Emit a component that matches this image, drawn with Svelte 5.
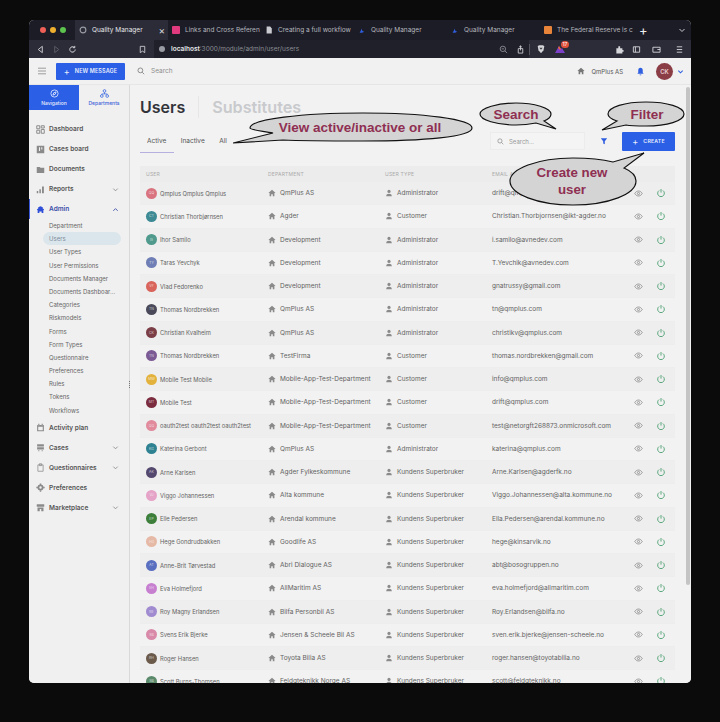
<script>
  const tabs = [
    { title: 'Quality Manager', icon: 'globe', active: true },
    { title: 'Links and Cross Referen', icon: 'pink' },
    { title: 'Creating a full workflow', icon: 'doc' },
    { title: 'Quality Manager', icon: 'q' },
    { title: 'Quality Manager', icon: 'q' },
    { title: 'The Federal Reserve is c', icon: 'orange' }
  ];

  const mainNav = [
    { label: 'Dashboard', icon: 'grid' },
    { label: 'Cases board', icon: 'board' },
    { label: 'Documents', icon: 'folder' },
    { label: 'Reports', icon: 'bars', chevron: 'down' },
    { label: 'Admin', icon: 'admin', chevron: 'up', active: true }
  ];
  const subNav = ['Department', 'Users', 'User Types', 'User Permissions', 'Documents Manager', 'Documents Dashboar...', 'Categories', 'Riskmodels', 'Forms', 'Form Types', 'Questionnaire', 'Preferences', 'Rules', 'Tokens', 'Workflows'];
  const lowerNav = [
    { label: 'Activity plan', icon: 'calendar' },
    { label: 'Cases', icon: 'cases', chevron: 'down' },
    { label: 'Questionnaires', icon: 'clip', chevron: 'down' },
    { label: 'Preferences', icon: 'gear' },
    { label: 'Marketplace', icon: 'store', chevron: 'down' }
  ];

  const users = [
    ['QQ', '#d9737f', 'Qmplus Qmplus Qmplus', 'QmPlus AS', 'Administrator', 'drift@qmplus.com'],
    ['CT', '#3d8a94', 'Christian Thorbjørnsen', 'Agder', 'Customer', 'Christian.Thorbjornsen@ikt-agder.no'],
    ['IS', '#4f9a8c', 'Ihor Samilo', 'Development', 'Administrator', 'i.samilo@avnedev.com'],
    ['TY', '#6f7fb5', 'Taras Yevchyk', 'Development', 'Administrator', 'T.Yevchik@avnedev.com'],
    ['VF', '#d9645c', 'Vlad Fedorenko', 'Development', 'Administrator', 'gnatrussy@gmail.com'],
    ['TN', '#4a4a5a', 'Thomas Nordbrekken', 'QmPlus AS', 'Administrator', 'tn@qmplus.com'],
    ['CK', '#7b3d46', 'Christian Kvalheim', 'QmPlus AS', 'Administrator', 'christikv@qmplus.com'],
    ['TN', '#7c5a94', 'Thomas Nordbrekken', 'TestFirma', 'Customer', 'thomas.nordbrekken@gmail.com'],
    ['MM', '#e3b23c', 'Mobile Test Mobile', 'Mobile-App-Test-Department', 'Customer', 'info@qmplus.com'],
    ['MT', '#7b2d3f', 'Mobile Test', 'Mobile-App-Test-Department', 'Customer', 'drift@qmplus.com'],
    ['OO', '#e08a9c', 'oauth2test oauth2test oauth2test', 'Mobile-App-Test-Department', 'Customer', 'test@netorgft268873.onmicrosoft.com'],
    ['KG', '#2f8291', 'Katerina Gerbont', 'QmPlus AS', 'Administrator', 'katerina@qmplus.com'],
    ['AK', '#54486e', 'Arne Karlsen', 'Agder Fylkeskommune', 'Kundens Superbruker', 'Arne.Karlsen@agderfk.no'],
    ['VJ', '#e5a3c8', 'Viggo Johannessen', 'Alta kommune', 'Kundens Superbruker', 'Viggo.Johannessen@alta.kommune.no'],
    ['EP', '#3d7f3a', 'Elle Pedersen', 'Arendal kommune', 'Kundens Superbruker', 'Ella.Pedersen@arendal.kommune.no'],
    ['HG', '#e5b9a5', 'Hege Gondrudbakken', 'Goodlife AS', 'Kundens Superbruker', 'hege@kinsarvik.no'],
    ['AT', '#5a6fc0', 'Anne-Brit Tørvestad', 'Abri Dialogue AS', 'Kundens Superbruker', 'abt@bosogruppen.no'],
    ['EH', '#c77fd0', 'Eva Holmefjord', 'AllMaritim AS', 'Kundens Superbruker', 'eva.holmefjord@allmaritim.com'],
    ['RE', '#a08bd0', 'Roy Magny Erlandsen', 'Bilfa Personbil AS', 'Kundens Superbruker', 'Roy.Erlandsen@bilfa.no'],
    ['SB', '#d98aa8', 'Svens Erik Bjerke', 'Jensen & Scheele Bil AS', 'Kundens Superbruker', 'sven.erik.bjerke@jensen-scheele.no'],
    ['RH', '#6b5a4a', 'Roger Hansen', 'Toyota Bilia AS', 'Kundens Superbruker', 'roger.hansen@toyotabilia.no'],
    ['SB', '#5a8a6a', 'Scott Burns-Thomsen', 'Feldgteknikk Norge AS', 'Kundens Superbruker', 'scott@feldgteknikk.no']
  ];
</script>

{#snippet navIcon(name)}
  <svg class="nav-icon" viewBox="0 0 12 12" fill="currentColor">
    {#if name === 'grid'}
      <path d="M1 1h4v4H1zM7 1h4v3H7zM7 6h4v5H7zM1 7h4v4H1z" fill="none" stroke="currentColor" stroke-width="1.3" />
    {:else if name === 'board'}
      <path d="M1 1h10v10H1z M4 3v5h1.400V3z M7 3v3h1.400V3z" fill-rule="evenodd" />
    {:else if name === 'folder'}
      <path d="M1 2.500h4l1 1.200h5V10.500H1z" />
    {:else if name === 'bars'}
      <path d="M1 8h2v3H1zM4.500 5.500h2V11h-2zM8 2h2.500v9H8z" />
    {:else if name === 'admin'}
      <path d="M6 1.500 9 3v1.800l1.800 1-1 1.500V10.500H7.500V8.500h-3v2H2.200V7.300l-1-1.500L3 4.800V3z" />
    {:else if name === 'calendar'}
      <path d="M1.500 2.500h9v8.500h-9z M3 5v4.500h6V5z M3 1h1.500v2H3z M7.500 1H9v2H7.500z" fill-rule="evenodd" />
    {:else if name === 'cases'}
      <path d="M1.500 1.500h9v3h-9zM1.500 5.500h9v3h-9zM3 9.500h1.500V11H3zM7.500 9.500H9V11H7.500z" />
    {:else if name === 'clip'}
      <path d="M2.500 2.500h7v8.500h-7z M4.500 1h3v2.500h-3z" fill="none" stroke="currentColor" stroke-width="1" />
    {:else if name === 'gear'}
      <circle cx="6" cy="6" r="2.800" fill="none" stroke="currentColor" stroke-width="2.400" />
      <path d="M5 .5h2v2H5zM5 9.500h2v2H5zM.5 5h2v2h-2zM9.500 5h2v2h-2z" />
    {:else if name === 'store'}
      <path d="M1 1.500h10v3.500H1zM2 6h8v5H7V8H5v3H2z" />
    {/if}
  </svg>
{/snippet}

{#snippet chevron(dir)}
  <svg class="chev" class:up={dir === 'up'} viewBox="0 0 8 8" fill="none" stroke="currentColor" stroke-width="1">
    <path d={dir === 'up' ? 'M1.500 5.500 4 3l2.500 2.500' : 'M1.500 3 4 5.500 6.500 3'} />
  </svg>
{/snippet}

{#snippet navRow(item)}
  <div class="nav-row" class:active={item.active}>
    {@render navIcon(item.icon)}
    <span>{item.label}</span>
    {#if item.chevron}{@render chevron(item.chevron)}{/if}
  </div>
{/snippet}

<div class="window">
  <div class="tabbar">
    <div class="lights"><i class="red"></i><i class="yellow"></i><i class="green"></i></div>
    {#each tabs as tab}
      <div class="tab" class:active={tab.active}>
        {#if tab.icon === 'globe'}
          <svg class="fav" viewBox="0 0 10 10"><circle cx="5" cy="5" r="3.600" fill="none" stroke="#9a9ca4" stroke-width="1.400" /></svg>
        {:else if tab.icon === 'pink'}
          <span class="fav-box pink"></span>
        {:else if tab.icon === 'doc'}
          <svg class="fav" viewBox="0 0 10 10"><path d="M2 .5h4.500L8.500 3v6.500H2z" fill="#c9cbd0" /></svg>
        {:else if tab.icon === 'q'}
          <svg class="fav" viewBox="0 0 10 10"><path d="M2 8c2 1 4 .5 6-1-2 0-3-1-3.500-4C4 5 3 7 2 8z" fill="#2f5fe0" /></svg>
        {:else}
          <span class="fav-box orange"></span>
        {/if}
        <span class="tab-title">{tab.title}</span>
        {#if tab.active}<span class="close">×</span>{/if}
      </div>
    {/each}
    <span class="plus">+</span>
    <svg class="tabs-menu" viewBox="0 0 8 8" fill="none" stroke="#c9cbd0" stroke-width="1"><path d="M1.500 3 4 5.500 6.500 3" /></svg>
  </div>

  <div class="toolbar">
    <div class="tool-left">
      <svg viewBox="0 0 10 10" fill="none" stroke="#d5d6da" stroke-width="1"><path d="M7 1.500v7L2.500 5z" /></svg>
      <svg viewBox="0 0 10 10" fill="none" stroke="#5d6069" stroke-width="1"><path d="M3 1.500v7L7.500 5z" /></svg>
      <svg viewBox="0 0 10 10" fill="none" stroke="#d5d6da" stroke-width="1.100"><path d="M8 5a3 3 0 1 1-1-2.300M7.500 1v2h-2" /></svg>
    </div>
    <svg class="bookmark" viewBox="0 0 10 10" fill="none" stroke="#c9cbd0" stroke-width="1"><path d="M2.500 1.500h5v7L5 6.800 2.500 8.500z" /></svg>
    <div class="url">
      <span class="info"></span>
      <span class="host">localhost</span><span class="path">:3000/module/admin/user/users</span>
      <svg class="zoom-out" viewBox="0 0 10 10" fill="none" stroke="#8b8d95" stroke-width="1"><circle cx="4.300" cy="4.300" r="3" /><path d="M6.500 6.500 9 9M3 4.300h2.600" /></svg>
      <svg class="share" viewBox="0 0 10 10" fill="none" stroke="#c9cbd0" stroke-width="1"><path d="M2.500 4h5v5h-5zM5 6V1M3.500 2.300 5 1l1.500 1.300" /></svg>
    </div>
    <span class="sep"></span>
    <svg class="brave" viewBox="0 0 12 12"><path d="M2 2.500 4 1.500h4l2 1-1 5L6 11 3 7.500z" fill="#d5d6da" /><path d="M4 4.500h4L6 7z" fill="#3a3c46" /></svg>
    <div class="rewards">
      <svg viewBox="0 0 12 12"><path d="M1 10 5 3l2 3 1-1 3 5z" fill="#7b3fc8" /><path d="M4 5 5 3l2 3-1 1z" fill="#e8653a" /></svg>
      <span class="count">17</span>
    </div>
    <div class="tool-right">
      <svg viewBox="0 0 10 10"><path d="M1.500 3.500h2.200V1.500h2v2h2.500v2h1.300v2H8.200v2h-6.700z" fill="#d5d6da" /></svg>
      <svg viewBox="0 0 10 10" fill="none" stroke="#d5d6da" stroke-width="1"><path d="M1.500 2h7v6h-7zM3.800 2v6" /></svg>
      <svg viewBox="0 0 10 10" fill="none" stroke="#d5d6da" stroke-width="1"><path d="M1 2.500h8v5.500H1zM6 5h3" /></svg>
      <svg viewBox="0 0 10 10" fill="none" stroke="#d5d6da" stroke-width="1"><path d="M2 2h6M2 5h6M2 8h6" /></svg>
    </div>
  </div>

  <header class="appbar">
    <svg class="burger" viewBox="0 0 12 10" fill="none" stroke="#888" stroke-width="1"><path d="M1 1.500h10M1 5h10M1 8.500h10" /></svg>
    <button class="new-message"><span class="btn-plus">+</span>NEW MESSAGE</button>
    <svg class="top-search" viewBox="0 0 10 10" fill="none" stroke="#777" stroke-width="1"><circle cx="4.200" cy="4.200" r="3" /><path d="M6.500 6.500 9 9" /></svg>
    <span class="top-search-text">Search</span>
    <div class="account">
      <svg class="home" viewBox="0 0 10 10"><path d="M5 1 9.500 5H8v4H6V6.500H4V9H2V5H.5z" fill="#777" /></svg>
      <span class="company">QmPlus AS</span>
      <svg class="bell" viewBox="0 0 10 10"><path d="M5 .8C3.300.8 2.500 2 2.500 3.800V6L1.500 7.500h7L7.500 6V3.800C7.500 2 6.700.8 5 .8zM4 8.200h2a1 1 0 0 1-2 0z" fill="#2f5fe0" /></svg>
      <span class="me">CK</span>
      <svg class="me-chev" viewBox="0 0 8 8" fill="none" stroke="#2f5fe0" stroke-width="1.200"><path d="M1.500 3 4 5.500 6.500 3" /></svg>
    </div>
  </header>

  <div class="body">
    <aside class="sidebar">
      <div class="switch">
        <div class="sw on">
          <svg viewBox="0 0 10 10" fill="none" stroke="#fff" stroke-width=".8"><circle cx="5" cy="5" r="4" /><path d="M6.800 3.200 5.800 5.800 3.200 6.800 4.200 4.200z" /></svg>
          <span>Navigation</span>
        </div>
        <div class="sw">
          <svg viewBox="0 0 10 10" fill="none" stroke="#2f5fe0" stroke-width=".8"><circle cx="5" cy="2.200" r="1.500" /><circle cx="2" cy="7.800" r="1.500" /><circle cx="8" cy="7.800" r="1.500" /><path d="M5 3.700v1.800M2 6.300V5.500h6v.8" /></svg>
          <span>Departments</span>
        </div>
      </div>
      <nav class="nav">
        {#each mainNav as item}
          {@render navRow(item)}
        {/each}
        <div class="sub">
          {#each subNav as label}
            <div class="sub-row" class:current={label === 'Users'}>{label}</div>
          {/each}
        </div>
        {#each lowerNav as item}
          {@render navRow(item)}
        {/each}
      </nav>
      <span class="handle"></span>
    </aside>

    <main class="content">
      <div class="scrollbar"></div>
      <div class="titles">
        <h1>Users</h1>
        <h2>Substitutes</h2>
      </div>
      <div class="filters">
        <div class="tabs">
          <span class="on">Active</span>
          <span>Inactive</span>
          <span>All</span>
        </div>
        <div class="search-box">
          <svg viewBox="0 0 10 10" fill="none" stroke="#888" stroke-width="1"><circle cx="4.200" cy="4.200" r="3" /><path d="M6.500 6.500 9 9" /></svg>
          <span>Search...</span>
        </div>
        <svg class="filter" viewBox="0 0 10 10"><path d="M1 1.500h8L6 5.200V9L4 8V5.200z" fill="#2f5fe0" /></svg>
        <button class="create"><span class="btn-plus">+</span>CREATE</button>
      </div>

      <div class="table">
        <div class="row head">
          <span class="c-user">USER</span>
          <span class="c-dept">DEPARTMENT</span>
          <span class="c-type">USER TYPE</span>
          <span class="c-mail">EMAIL ADDRESS</span>
        </div>
        {#each users as u}
          <div class="row">
            <span class="c-user">
              <span class="avatar" style="background:{u[1]}">{u[0]}</span>
              <span class="name">{u[2]}</span>
            </span>
            <span class="c-dept">
              <svg viewBox="0 0 10 10"><path d="M5 1 9.500 5H8v4H6V6.500H4V9H2V5H.5z" fill="#8a8a8a" /></svg>
              {u[3]}
            </span>
            <span class="c-type">
              <svg viewBox="0 0 10 10"><circle cx="5" cy="3" r="2" fill="#8a8a8a" /><path d="M1.500 9c0-2 1.500-3 3.500-3s3.500 1 3.500 3z" fill="#8a8a8a" /></svg>
              {u[4]}
            </span>
            <span class="c-mail">{u[5]}</span>
            <svg class="eye" viewBox="0 0 12 12" fill="none" stroke="#777" stroke-width=".9"><path d="M1 6c1.300-2.200 3-3.300 5-3.300S9.700 3.800 11 6c-1.300 2.200-3 3.300-5 3.300S2.300 8.200 1 6z" /><circle cx="6" cy="6" r="1.500" /></svg>
            <svg class="power" viewBox="0 0 12 12" fill="none" stroke="#3f9a68" stroke-width="1"><path d="M3.800 3a4 4 0 1 0 4.400 0M6 1.200v4.300" /></svg>
          </div>
        {/each}
      </div>

      <div class="callout view">
        <svg viewBox="0 0 242 32"><path d="M0 31 40 21C30 19 17 18 17 16 17 7 70 1 130 1S239 7 239 16 190 29 130 29C100 29 70 29 50 28z" /></svg>
        <span>View active/inactive or all</span>
      </div>
      <div class="callout search">
        <svg viewBox="0 0 78 28"><path d="M77 27 65 19C70 17 72 14 72 12 72 6 55 1 37 1S1 6 1 12 18 23 37 23C44 23 52 22 57 21z" /></svg>
        <span>Search</span>
      </div>
      <div class="callout filter-note">
        <svg viewBox="0 0 84 30"><path d="M1 29 16 20C10 18 7 15 7 13 7 6 24 1 45 1S83 6 83 13 66 25 45 25C37 25 30 25 25 24z" /></svg>
        <span>Filter</span>
      </div>
      <div class="callout create-note">
        <svg viewBox="0 0 136 54"><path d="M135 1 104 10C92 7 80 6 64 6 28 6 1 17 1 29 1 42 28 53 64 53S127 42 127 29C127 24 122 19 115 16z" /></svg>
        <span>Create new<br />user</span>
      </div>
    </main>
  </div>
</div>

<style>
  :global(body) {
    margin: 0;
    background: #0b0b0c;
  }
  .window {
    width: 662px;
    height: 663px;
    margin: 20px 0 0 29px;
    border-radius: 5px;
    overflow: hidden;
    display: flex;
    flex-direction: column;
    font-family: Inter, 'Liberation Sans', sans-serif;
    background: #f1f1f1;
  }
  svg { display: block; flex: none; }

  .tabbar {
    height: 20px;
    background: #1c1c26;
    display: flex;
    align-items: stretch;
    color: #b5b7bd;
    font-size: 6.500px;
    flex: none;
  }
  .lights {
    width: 46px;
    display: flex;
    align-items: center;
    gap: 4px;
    padding-left: 11px;
    box-sizing: border-box;
  }
  .lights i { width: 6px; height: 6px; border-radius: 50%; }
  .red { background: #ed5f57; }
  .yellow { background: #f0b02f; }
  .green { background: #5cc34f; }
  .tab {
    width: 93px;
    display: flex;
    align-items: center;
    gap: 5px;
    padding-left: 4px;
    box-sizing: border-box;
    white-space: nowrap;
  }
  .tab.active {
    background: #2b2c37;
    color: #e6e7ea;
    padding-right: 3px;
  }
  .tab-title { flex: 1; }
  .fav { width: 8px; height: 8px; }
  .fav-box { width: 8px; height: 8px; border-radius: 1px; flex: none; }
  .pink { background: #e03a7e; }
  .orange { background: #e8833a; }
  .close { font-size: 10px; color: #d5d6da; }
  .plus { color: #eee; font-size: 13px; margin: 0 0 0 6px; line-height: 20px; }
  .tabs-menu { width: 8px; height: 8px; margin: 6px 0 0 30px; }

  .toolbar {
    height: 18px;
    background: #2b2c37;
    display: flex;
    align-items: center;
    flex: none;
    color: #c9cbd0;
  }
  .tool-left { display: flex; gap: 7px; padding-left: 7px; width: 98px; box-sizing: border-box; }
  .tool-left svg, .tool-right svg { width: 9px; height: 9px; }
  .bookmark { width: 9px; height: 9px; margin-left: 11px; }
  .url {
    width: 375px;
    height: 18px;
    margin-left: 7px;
    padding-left: 5px;
    box-sizing: border-box;
    background: #1f2029;
    display: flex;
    align-items: center;
    font-size: 6.500px;
  }
  .info { width: 6px; height: 6px; border-radius: 50%; background: #9a9ca4; margin-right: 6px; }
  .host { color: #e6e7ea; font-weight: 600; }
  .path { color: #8b8d95; }
  .zoom-out { width: 9px; height: 9px; margin-left: auto; }
  .share { width: 9px; height: 9px; margin: 0 4px 0 8px; }
  .sep { width: 1px; height: 11px; background: #55565f; }
  .brave { width: 10px; height: 10px; margin-left: 6px; }
  .rewards { position: relative; width: 12px; height: 12px; margin-left: 8px; }
  .rewards svg { width: 12px; height: 12px; }
  .count {
    position: absolute;
    top: -2px;
    right: -3px;
    width: 8px;
    height: 7px;
    border-radius: 4px;
    background: #e0503a;
    color: #fff;
    font-size: 5px;
    line-height: 7px;
    text-align: center;
  }
  .tool-right { display: flex; margin-left: 49px; }
  .tool-right svg:nth-child(2) { margin-left: 8px; }
  .tool-right svg:nth-child(3) { margin-left: 11px; }
  .tool-right svg:nth-child(4) { margin-left: 14px; }

  .appbar {
    height: 27px;
    background: #f1f1f1;
    display: flex;
    align-items: center;
    flex: none;
    border-bottom: 1px solid #e6e6e6;
    box-sizing: border-box;
  }
  .burger { width: 10px; height: 8px; margin-left: 8px; }
  button {
    border: none;
    background: #2a5fe6;
    color: #e9eefc;
    font-family: inherit;
    font-weight: 600;
    display: flex;
    align-items: center;
    justify-content: center;
    padding: 0;
    border-radius: 1px;
  }
  .new-message {
    width: 69px;
    height: 17px;
    margin-left: 9px;
    font-size: 5.500px;
    letter-spacing: .1px;
  }
  .btn-plus { font-size: 9px; margin-right: 5px; font-weight: 400; line-height: 1; }
  .top-search { width: 8px; height: 8px; margin-left: 12px; }
  .top-search-text { font-size: 6.500px; color: #8d8d8d; margin-left: 6px; }
  .account { margin-left: auto; display: flex; align-items: center; }
  .home { width: 8px; height: 8px; }
  .company { font-size: 6px; color: #555; margin: 0 13px 0 6px; }
  .bell { width: 9px; height: 9px; }
  .me {
    width: 17px;
    height: 17px;
    margin-left: 11px;
    border-radius: 50%;
    background: #8b3d46;
    color: #e8cfd2;
    font-size: 6px;
    font-weight: 600;
    display: flex;
    align-items: center;
    justify-content: center;
  }
  .me-chev { width: 7px; height: 7px; margin: 0 7px 0 4px; }

  .body { flex: 1; display: flex; min-height: 0; }
  .sidebar {
    width: 101px;
    flex: none;
    border-right: 1px solid #d9d9d9;
    box-sizing: border-box;
    background: #f0f0f0;
    position: relative;
  }
  .handle {
    position: absolute;
    right: -1px;
    top: 296px;
    height: 7px;
    border-right: 1px dotted #777;
  }
  .switch { display: flex; height: 25px; }
  .sw {
    width: 50px;
    display: flex;
    flex-direction: column;
    align-items: center;
    justify-content: center;
    gap: 2px;
    font-size: 5px;
    color: #3b62d8;
    font-weight: 500;
  }
  .sw svg { width: 9px; height: 9px; }
  .sw.on { background: #2a5fe6; color: #e9eefc; }
  .nav { padding-top: 9px; }
  .nav-row {
    height: 20px;
    display: flex;
    align-items: center;
    padding-left: 7px;
    font-size: 6.500px;
    font-weight: 600;
    color: #555;
    box-sizing: border-box;
  }
  .nav-row.active { color: #3b4ea8; border-left: 1px solid #3a55d8; padding-left: 6px; }
  .nav-icon { width: 9px; height: 9px; margin-right: 4px; color: #8a8a8a; }
  .active .nav-icon { color: #2f4fd8; }
  .chev { width: 7px; height: 7px; margin-left: auto; margin-right: 10px; color: #8a8a8a; }
  .chev.up { color: #3b4ea8; }
  .sub { padding-bottom: 1px; }
  .sub-row {
    height: 13.200px;
    line-height: 13.200px;
    padding-left: 20px;
    font-size: 6px;
    color: #666;
    white-space: nowrap;
  }
  .sub-row.current {
    background: #dbe6ec;
    width: 78px;
    margin-left: 14px;
    padding-left: 6px;
    border-radius: 7px;
    color: #7c8a9a;
    box-sizing: border-box;
  }

  .content {
    flex: 1;
    position: relative;
    min-width: 0;
    padding: 0 16px 0 10px;
    overflow: hidden;
    background: #f2f2f2;
  }
  .scrollbar {
    position: absolute;
    right: 1px;
    top: 2px;
    width: 4px;
    height: 498px;
    background: #c4c4c4;
    border-radius: 3px;
  }
  .titles { display: flex; align-items: center; height: 44px; }
  h1, h2 { margin: 0; font-size: 16px; font-weight: 600; line-height: 22px; }
  h1 { color: #33343a; padding-right: 13px; border-right: 1px solid #e6e6e6; }
  h2 { color: #c9cacd; padding-left: 13px; font-size: 16.200px; }
  .filters { display: flex; align-items: center; height: 23px; }
  .tabs {
    display: flex;
    width: 350px;
    height: 23px;
    align-items: center;
    font-size: 6.500px;
    color: #555;
    gap: 14.500px;
    padding-left: 7px;
    box-sizing: border-box;
    position: relative;
  }
  .tabs .on::after {
    content: '';
    position: absolute;
    left: 0;
    bottom: -1px;
    width: 34px;
    height: 1px;
    background: #b5b0e0;
  }
  .search-box {
    width: 95px;
    height: 18px;
    margin-top: 1px;
    background: #f4f4f4;
    border: 1px solid #ececec;
    box-sizing: border-box;
    display: flex;
    align-items: center;
    gap: 5px;
    padding-left: 6px;
    font-size: 6px;
    color: #999;
  }
  .search-box svg { width: 7px; height: 7px; }
  .filter { width: 8px; height: 8px; margin-left: 15px; margin-top: 1px; }
  .create { width: 53px; height: 19px; margin-left: 14px; margin-top: 1px; font-size: 5.200px; letter-spacing: .2px; }

  .table { margin-top: 14px; width: 535px; }
  .row {
    height: 23.260px;
    display: flex;
    align-items: center;
    font-size: 6.500px;
    color: #636363;
    white-space: nowrap;
    border-bottom: 1px solid #ededed;
    box-sizing: border-box;
  }
  .row:nth-child(even) { background: #eeeeee; }
  .row.head {
    height: 16px;
    background: #ececec;
    color: #aaa;
    font-size: 5px;
    letter-spacing: .2px;
    border: none;
  }
  .c-user { width: 125px; padding-left: 6px; display: flex; align-items: center; gap: 3px; box-sizing: border-box; }
  .c-dept { width: 119px; padding-left: 3px; display: flex; align-items: center; gap: 4px; box-sizing: border-box; }
  .c-type { width: 108px; padding-left: 1px; display: flex; align-items: center; gap: 4px; box-sizing: border-box; }
  .c-mail { width: 140px; }
  .c-dept svg, .c-type svg { width: 8px; height: 8px; }
  .avatar {
    width: 11px;
    height: 11px;
    border-radius: 50%;
    color: rgba(255, 255, 255, .7);
    font-size: 3.500px;
    display: flex;
    align-items: center;
    justify-content: center;
  }
  .name { font-size: 5.800px; }
  .eye { width: 9px; height: 9px; margin-left: 2px; }
  .power { width: 10px; height: 10px; margin-left: 13px; }

  .callout {
    position: absolute;
    display: flex;
    align-items: center;
    justify-content: center;
    text-align: center;
    color: #8f2f52;
    font-family: 'Liberation Sans', sans-serif;
    font-weight: 700;
    font-size: 13.500px;
    box-sizing: border-box;
  }
  .callout svg { position: absolute; inset: 0; width: 100%; height: 100%; }
  .callout path { fill: #d4d4d4; stroke: #111; stroke-width: 1.200; }
  .callout span { position: relative; }
  .view { left: 103px; top: 27px; width: 242px; height: 32px; padding: 0 0 2px 12px; }
  .search { left: 349px; top: 17px; width: 78px; height: 28px; padding: 0 4px 4px 0; }
  .filter-note { left: 471px; top: 16px; width: 84px; height: 30px; padding: 0 0 4px 8px; }
  .create-note { left: 379px; top: 67px; width: 136px; height: 54px; padding: 4px 10px 0 0; font-size: 13.300px; line-height: 17px; }
</style>
